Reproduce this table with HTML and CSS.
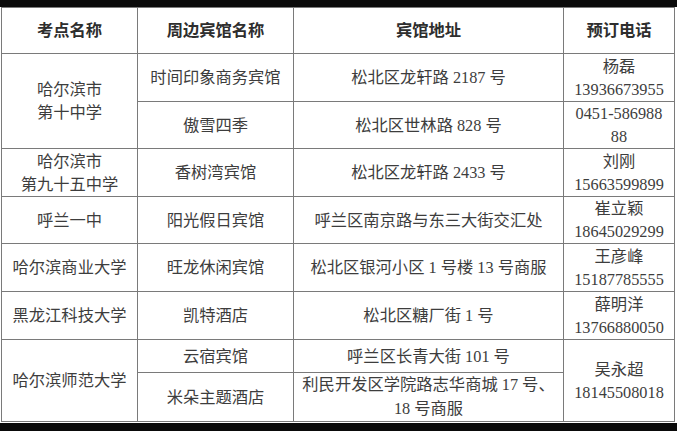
FILE: index.html
```html
<!DOCTYPE html>
<html lang="zh-CN">
<head>
<meta charset="utf-8">
<title>考点周边宾馆</title>
<link rel="stylesheet" href="styles.css">
</head>
<body>
<div class="bar-top"></div>
<main class="sheet">
<table class="hotels">
  <colgroup>
    <col class="c1"><col class="c2"><col class="c3"><col class="c4">
  </colgroup>
  <thead>
    <tr class="r-head">
      <th>考点名称</th><th>周边宾馆名称</th><th>宾馆地址</th><th>预订电话</th>
    </tr>
  </thead>
  <tbody>
    <tr class="r-a">
      <td rowspan="2">哈尔滨市<br>第十中学</td>
      <td>时间印象商务宾馆</td>
      <td>松北区龙轩路 2187 号</td>
      <td class="tel">杨磊<br>13936673955</td>
    </tr>
    <tr class="r-b">
      <td>傲雪四季</td>
      <td>松北区世林路 828 号</td>
      <td class="tel">0451-586988<br>88</td>
    </tr>
    <tr class="r-a">
      <td>哈尔滨市<br>第九十五中学</td>
      <td>香树湾宾馆</td>
      <td>松北区龙轩路 2433 号</td>
      <td class="tel">刘刚<br>15663599899</td>
    </tr>
    <tr class="r-b">
      <td>呼兰一中</td>
      <td>阳光假日宾馆</td>
      <td>呼兰区南京路与东三大街交汇处</td>
      <td class="tel">崔立颖<br>18645029299</td>
    </tr>
    <tr class="r-a">
      <td>哈尔滨商业大学</td>
      <td>旺龙休闲宾馆</td>
      <td>松北区银河小区 1 号楼 13 号商服</td>
      <td class="tel">王彦峰<br>15187785555</td>
    </tr>
    <tr class="r-a">
      <td>黑龙江科技大学</td>
      <td>凯特酒店</td>
      <td>松北区糖厂街 1 号</td>
      <td class="tel">薛明洋<br>13766880050</td>
    </tr>
    <tr class="r-short">
      <td rowspan="2">哈尔滨师范大学</td>
      <td>云宿宾馆</td>
      <td>呼兰区长青大街 101 号</td>
      <td class="tel" rowspan="2">吴永超<br>18145508018</td>
    </tr>
    <tr class="r-b">
      <td>米朵主题酒店</td>
      <td class="wide-lines">利民开发区学院路志华商城 17 号、<br>18 号商服</td>
    </tr>
  </tbody>
</table>
</main>
<div class="bar-bottom"></div>
</body>
</html>
```
FILE: styles.css
```css
html, body {
  margin: 0;
  padding: 0;
  background: #ffffff;
  width: 677px;
  height: 431px;
  overflow: hidden;
}

body {
  display: flex;
  flex-direction: column;
  font-family: "Liberation Serif", "Noto Sans CJK SC", serif;
  color: #3d3d3d;
}

.bar-top {
  height: 7px;
  background: #0a0a0a;
  flex: none;
}

.bar-bottom {
  flex: 1;
  background: #0a0a0a;
}

.sheet {
  padding: 0 0 1px 1px;
  flex: none;
}

.hotels {
  border-collapse: collapse;
  table-layout: fixed;
  width: 673px;
  font-size: 16.3px;
  line-height: 23px;
}

.c1 { width: 136px; }
.c2 { width: 156px; }
.c3 { width: 270px; }
.c4 { width: 111px; }

.hotels th,
.hotels td {
  border: 1px solid #7a7a7a;
  padding: 0 4px;
  text-align: center;
  vertical-align: middle;
  white-space: nowrap;
}

.hotels th {
  font-weight: 700;
  color: #2e2e2e;
}

.r-head { height: 46px; }
.r-a { height: 48px; }
.r-b { height: 47px; }
.r-short { height: 33px; }

.wide-lines {
  line-height: 24px;
  padding-top: 0;
  vertical-align: top;
}
```
